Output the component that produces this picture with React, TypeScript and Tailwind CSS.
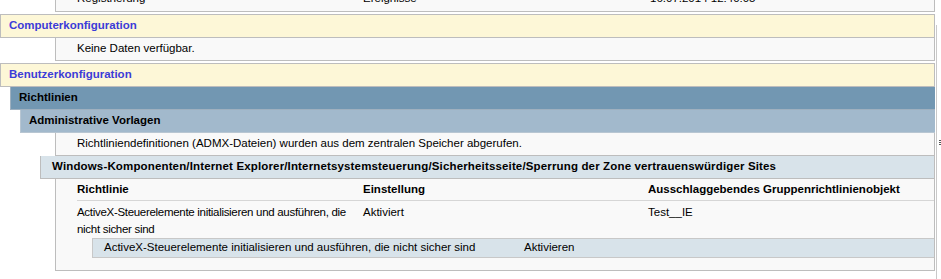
const font = { fontFamily: '"Liberation Sans", Arial, sans-serif' };

function App() {
  return (
    <div className="relative h-[279px] w-[941px] overflow-hidden bg-white text-[11.5px] text-black" style={font}>
      <div className="w-[935px]">
        {/* previous section, scrolled out of view */}
        <div className="ml-[55px] h-[12px] overflow-hidden border-b border-l border-r border-[#bdbdbd] bg-[#f9f9f9]">
          <div className="-mt-[9px] flex h-[16px] items-center">
            <span className="ml-[21px] w-[286px]">Registrierung</span>
            <span className="w-[287px]">Ereignisse</span>
            <span>16.07.2014 12:40:05</span>
          </div>
        </div>

        <div className="mt-[2px] flex h-[24px] items-center border border-[#bdbdbd] bg-[#fdf7d7] pl-[8px] font-bold text-[#3c3cd8]">
          Computerkonfiguration
        </div>
        <div className="ml-[55px] flex h-[23px] items-center border-b border-l border-r border-[#bdbdbd] bg-[#f9f9f9] pl-[21px]">
          Keine Daten verfügbar.
        </div>

        <div className="mt-[2px] flex h-[24px] items-center border border-[#bdbdbd] bg-[#fdf7d7] pl-[8px] font-bold text-[#3c3cd8]">
          Benutzerkonfiguration
        </div>
        <div className="ml-[10px] flex h-[23px] items-center border-b border-l border-[#9fb0bf] bg-[#7297b2] pl-[8px] font-bold">
          Richtlinien
        </div>
        <div className="ml-[20px] flex h-[23px] items-center border-b border-l border-[#b8c6d2] bg-[#a2b9cc] pl-[8px] font-bold">
          Administrative Vorlagen
        </div>
        <div className="ml-[55px] flex h-[23px] items-center border-b border-l border-r border-[#bdbdbd] bg-[#f9f9f9] pl-[21px]">
          Richtliniendefinitionen (ADMX-Dateien) wurden aus dem zentralen Speicher abgerufen.
        </div>
        <div className="ml-[40px] flex h-[23px] items-center border-b border-l border-r border-[#bdbdbd] bg-[#d8e3ea] pl-[11px] font-bold tracking-[0.15px]">
          Windows-Komponenten/Internet Explorer/Internetsystemsteuerung/Sicherheitsseite/Sperrung der Zone vertrauenswürdiger Sites
        </div>

        <div className="ml-[55px] h-[92px] border-b border-l border-r border-[#bdbdbd] bg-[#f9f9f9] pl-[21px]">
          <div className="grid h-[22px] grid-cols-[286px_285px_1fr] items-end border-b border-[#d6d6d6] pb-[2px] font-bold">
            <span>Richtlinie</span>
            <span>Einstellung</span>
            <span>Ausschlaggebendes Gruppenrichtlinienobjekt</span>
          </div>
          <div className="grid grid-cols-[286px_285px_1fr] pt-[3px] leading-[17px]">
            <span className="pr-[10px] tracking-[-0.3px]">ActiveX-Steuerelemente initialisieren und ausführen, die nicht sicher sind</span>
            <span>Aktiviert</span>
            <span>Test__IE</span>
          </div>
          <div className="ml-[15px] grid h-[20px] grid-cols-[420px_1fr] items-center border border-r-0 border-[#c8c8c8] bg-[#d8e3ea] pl-[11px]">
            <span>ActiveX-Steuerelemente initialisieren und ausführen, die nicht sicher sind</span>
            <span>Aktivieren</span>
          </div>
        </div>
      </div>

      {/* scrollbar edge */}
      <div className="absolute left-[936px] top-[25px] h-[254px] w-[5px] border-l border-[#c9c9c9] bg-white">
        <div className="mt-[115px] ml-[2px] flex flex-col gap-[1px]">
          <span className="h-px w-[2px] bg-[#555]" />
          <span className="h-px w-[2px] bg-[#555]" />
          <span className="h-px w-[2px] bg-[#555]" />
        </div>
      </div>
    </div>
  );
}

export default App;
